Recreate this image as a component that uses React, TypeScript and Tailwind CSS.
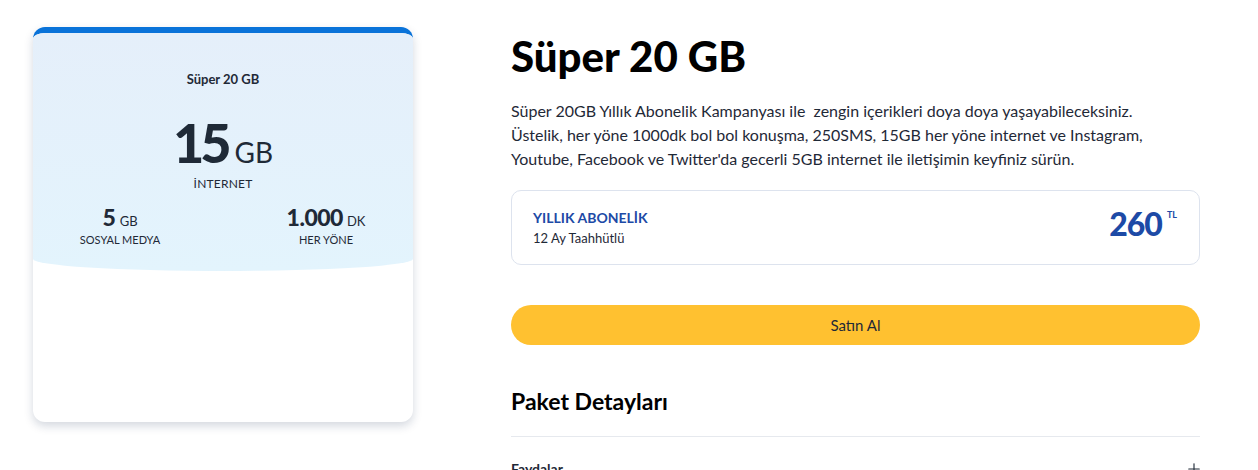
import { Plus } from "lucide-react";

export default function App() {
  return (
    <div
      className="w-[1258px] h-[470px] overflow-hidden bg-white text-[#1f2937]"
      style={{ fontFamily: "Lato, 'Noto Sans', sans-serif" }}
    >
      <div className="flex items-start pl-[33px] pt-[27px] gap-[98px]">
        {/* package card */}
        <div className="w-[380px] h-[395px] shrink-0 rounded-xl bg-white shadow-[0_4px_10px_rgba(15,40,80,0.18)] overflow-hidden border-t-[6px] border-[#0a73d9]">
          <div className="h-[238px] bg-gradient-to-b from-[#e5effa] to-[#e3f4fd] rounded-b-[50%_12px] flex flex-col items-center pt-[40px]">
            <div className="text-[13px] font-bold text-[#1f2937] leading-none">Süper 20 GB</div>
            <div className="mt-[30px] flex items-baseline gap-[7px] leading-none">
              <span className="text-[54px] font-black tracking-[-4px] text-[#1f2a37]">15</span>
              <span className="text-[28px] font-normal text-[#1f2a37]">GB</span>
            </div>
            <div className="mt-[8px] text-[12px] leading-none tracking-[0.2px]">İNTERNET</div>
            <div className="mt-[16px] w-full flex justify-between pl-[42px] pr-[37px]">
              <div className="flex flex-col items-center w-[90px]">
                <div className="flex items-baseline gap-[4px] leading-none">
                  <span className="text-[23px] font-black">5</span>
                  <span className="text-[13px]">GB</span>
                </div>
                <div className="mt-[5px] text-[11px] leading-none">SOSYAL MEDYA</div>
              </div>
              <div className="flex flex-col items-center w-[100px]">
                <div className="flex items-baseline gap-[4px] leading-none">
                  <span className="text-[23px] font-black tracking-[-0.5px]">1.000</span>
                  <span className="text-[13px]">DK</span>
                </div>
                <div className="mt-[5px] text-[11px] leading-none">HER YÖNE</div>
              </div>
            </div>
          </div>
        </div>

        {/* details */}
        <div className="w-[689px] flex flex-col">
          <h1 className="text-[42px] font-black text-black leading-none mt-[8px]">Süper 20 GB</h1>
          <p className="mt-[22px] text-[16px] leading-[24px] text-[#1f2937]">
            Süper 20GB Yıllık Abonelik Kampanyası ile&nbsp; zengin içerikleri doya doya yaşayabileceksiniz.
            <br />
            Üstelik, her yöne 1000dk bol bol konuşma, 250SMS, 15GB her yöne internet ve Instagram,
            <br />
            Youtube, Facebook ve Twitter'da gecerli 5GB internet ile iletişimin keyfiniz sürün.
          </p>

          <div className="mt-[19px] h-[75px] rounded-[10px] border border-[#dde3ee] flex items-center justify-between pl-[21px] pr-[22px]">
            <div className="flex flex-col">
              <span className="text-[14px] font-bold text-[#1d4aa6] leading-none">YILLIK ABONELİK</span>
              <span className="mt-[7px] text-[13px] leading-none text-[#1f2937]">12 Ay Taahhütlü</span>
            </div>
            <div className="flex items-start gap-[5px] text-[#1d4aa6] -mt-[8px]">
              <span className="text-[32px] font-black leading-none tracking-[-1px]">260</span>
              <span className="text-[9px] font-bold leading-none mt-[2px]">TL</span>
            </div>
          </div>

          <button className="mt-[40px] h-[40px] w-full rounded-full bg-[#ffc130] text-[15px] text-[#1f2937]">
            Satın Al
          </button>

          <h2 className="mt-[45px] text-[23px] font-bold text-black leading-none">Paket Detayları</h2>
          <div className="mt-[23px] h-px bg-[#e6e9ee]" />
          <div className="mt-[21px] flex items-center justify-between">
            <span className="text-[14px] font-bold text-[#1f2937]">Faydalar</span>
            <Plus className="w-[18px] h-[18px] text-[#1f2937] -mr-[3px]" strokeWidth={1.5} />
          </div>
        </div>
      </div>
    </div>
  );
}
